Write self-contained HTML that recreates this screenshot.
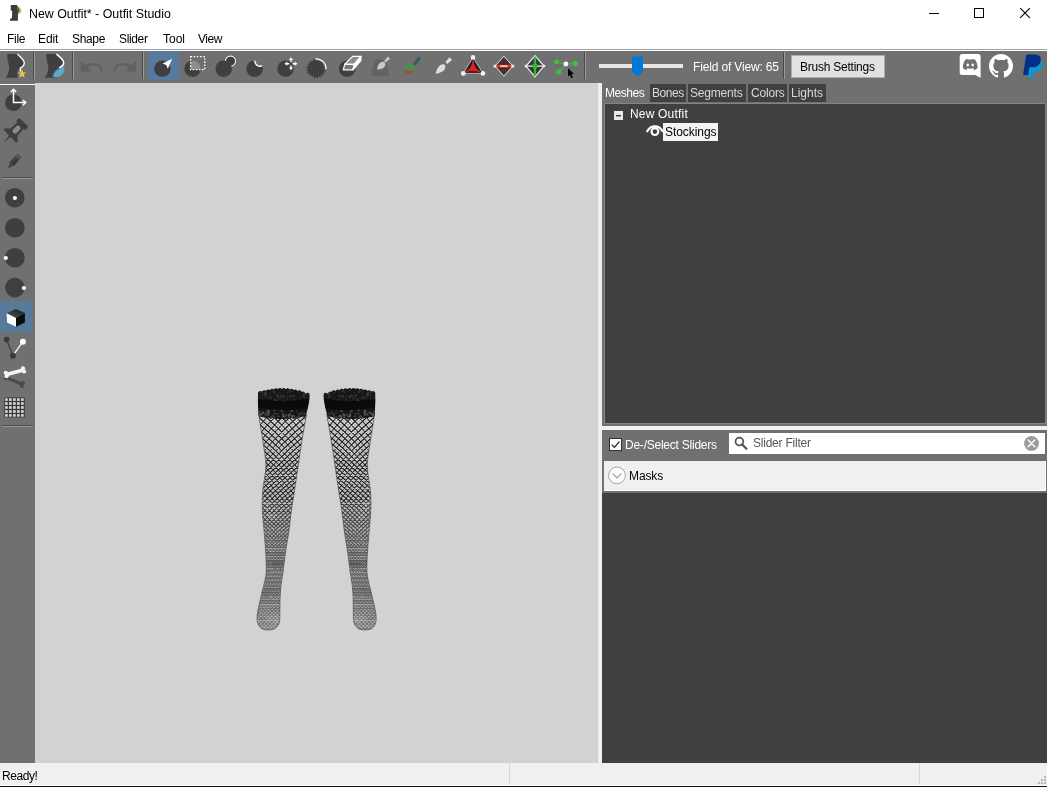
<!DOCTYPE html>
<html lang="en">
<head>
<meta charset="utf-8">
<title>New Outfit* - Outfit Studio</title>
<style>
html,body{margin:0;padding:0;}
body{width:1047px;height:787px;overflow:hidden;background:#fff;position:relative;
  font-family:"Liberation Sans",sans-serif;font-size:12px;color:#000;}
.a{position:absolute;}
.t{position:absolute;white-space:nowrap;line-height:16px;height:16px;will-change:transform;}
svg{position:absolute;overflow:visible;}
/* title + menu */
#title{left:29px;top:6px;font-size:12.4px;}
.menu{top:31px;}
/* toolbar */
#tb{left:0;top:51px;width:1047px;height:32px;background:#707070;}
#tbl1{left:0;top:49px;width:1047px;height:1px;background:#a0a0a0;}
.sep{top:52px;width:1px;height:27px;background:#484848;}
.sep2{top:52px;width:1px;height:27px;background:#9c9c9c;}
.sel{background:#557a9e;}
/* left toolbar */
#lt{left:0;top:83px;width:35px;height:680px;background:#707070;}
#ltl{left:0;top:84px;width:35px;height:1px;background:#fff;}
.hs{left:3px;width:29px;height:1px;background:#4a4a4a;}
.hs2{left:3px;width:29px;height:1px;background:#9a9a9a;}
/* viewport */
#vp{left:35px;top:83px;width:563px;height:680px;background:#d2d2d2;}
/* right */
#sash{left:598px;top:83px;width:4px;height:680px;background:#f0f0f0;}
#rp{left:602px;top:83px;width:445px;height:680px;background:#707070;}
#tree{left:605px;top:104px;width:440px;height:319px;background:#404040;box-shadow:0 0 0 1px #858585;}
#hsash{left:602px;top:426px;width:445px;height:4px;background:#f0f0f0;}
.tab{top:84px;height:18px;background:#404040;}
.tabt{top:85px;color:#d8d8d8;}
#masks{left:604px;top:461px;width:441px;height:29px;background:#f0f0f0;border-right:1px solid #fff;border-bottom:1px solid #fff;}
#dark2{left:602px;top:493px;width:445px;height:270px;background:#404040;}
#search{left:729px;top:433px;width:316px;height:21px;background:#fff;}
/* status */
#sb{left:0;top:763px;width:1047px;height:22px;background:#f0f0f0;}
#sbw{left:0;top:785px;width:1047px;height:1px;background:#fff;}
#sbb{left:0;top:786px;width:1047px;height:1px;background:#111;}
.ss{top:763px;width:1px;height:22px;background:#d7d7d7;}
</style>
</head>
<body>
<!-- title bar -->
<div class="t" id="title">New Outfit* - Outfit Studio</div>
<!-- menu -->
<div class="t menu" style="left:6.6px;letter-spacing:-0.27px">File</div>
<div class="t menu" style="left:38.4px;letter-spacing:-0.1px">Edit</div>
<div class="t menu" style="left:72.4px;letter-spacing:-0.35px">Shape</div>
<div class="t menu" style="left:118.7px;letter-spacing:-0.36px">Slider</div>
<div class="t menu" style="left:162.8px">Tool</div>
<div class="t menu" style="left:198.3px;letter-spacing:-0.5px">View</div>

<div class="a" id="tbl1"></div>
<div class="a" id="tb"></div>
<div class="a sel" style="left:148px;top:51px;width:31px;height:29px"></div>
<div class="a sep" style="left:33px"></div><div class="a sep2" style="left:34px"></div>
<div class="a sep" style="left:72px"></div><div class="a sep2" style="left:73px"></div>
<div class="a sep" style="left:142px"></div><div class="a sep2" style="left:143px"></div>
<div class="a sep" style="left:584px"></div><div class="a sep2" style="left:585px"></div>
<div class="a sep" style="left:783px"></div><div class="a sep2" style="left:784px"></div>

<!-- left toolbar / viewport / right panel -->
<div class="a" id="lt"></div>
<div class="a" id="ltl"></div>
<div class="a sel" style="left:0;top:301px;width:32px;height:31px"></div>
<div class="a hs" style="top:177px;left:2px;width:31px"></div><div class="a hs2" style="top:178px;left:2px;width:31px"></div>
<div class="a hs" style="top:425px;left:2px;width:31px"></div><div class="a hs2" style="top:426px;left:2px;width:31px"></div>
<div class="a" id="vp"></div>
<div class="a" id="sash"></div>
<div class="a" id="rp"></div>
<div class="a" id="tree"></div>
<div class="a" id="hsash"></div>
<div class="a" id="masks"></div>
<div class="a" id="dark2"></div>
<div class="a" id="search"></div>

<!-- tabs -->
<div class="a tab" style="left:650px;width:36px"></div>
<div class="a tab" style="left:688px;width:58px"></div>
<div class="a tab" style="left:748px;width:39px"></div>
<div class="a tab" style="left:789px;width:37px"></div>
<div class="t tabt" style="left:604.9px;color:#fff;letter-spacing:-0.46px">Meshes</div>
<div class="t tabt" style="left:651.7px;letter-spacing:-0.45px">Bones</div>
<div class="t tabt" style="left:690.2px;letter-spacing:-0.2px">Segments</div>
<div class="t tabt" style="left:751.1px;letter-spacing:-0.2px">Colors</div>
<div class="t tabt" style="left:790.8px">Lights</div>

<!-- tree -->
<div class="t" style="left:629.8px;top:106px;color:#fff;letter-spacing:0.19px">New Outfit</div>
<div class="a" style="left:663px;top:123px;width:55px;height:18px;background:#f4f4f4"></div>
<div class="t" style="left:664.5px;top:124px;color:#000;letter-spacing:-0.06px">Stockings</div>

<!-- sliders header -->
<div class="t" style="left:624.6px;top:437px;color:#fff;letter-spacing:-0.235px">De-/Select Sliders</div>
<div class="t" style="left:753.4px;top:435px;color:#575757;letter-spacing:-0.225px">Slider Filter</div>
<div class="t" style="left:628.5px;top:468px;color:#000;letter-spacing:-0.12px">Masks</div>

<!-- toolbar text -->
<div class="t" style="left:693.4px;top:59px;color:#fff;letter-spacing:-0.156px">Field of View: 65</div>
<div class="a" style="left:791px;top:55px;width:92px;height:21px;background:#e1e1e1;border:1px solid #adadad;box-sizing:content-box"></div>
<div class="t" style="left:799.6px;top:59px;color:#000;letter-spacing:-0.24px">Brush Settings</div>

<!-- status bar -->
<div class="a" id="sb"></div>
<div class="a" id="sbw"></div>
<div class="a" id="sbb"></div>
<div class="a ss" style="left:509px"></div>
<div class="a ss" style="left:919px"></div>
<div class="t" style="left:1.6px;top:768px;letter-spacing:-0.44px">Ready!</div>

<!-- toolbar icons (page coordinates) -->
<svg id="ico" width="1047" height="787" viewBox="0 0 1047 787" style="left:0;top:0">
<defs>
<clipPath id="cpSel"><circle cx="192.6" cy="68.7" r="8.3"/></clipPath>
<clipPath id="cpDef"><circle cx="254.6" cy="68.7" r="8.3"/></clipPath>
<linearGradient id="gPen" x1="0" y1="0" x2="1" y2="1"><stop offset="0" stop-color="#555"/><stop offset="1" stop-color="#2c2c2c"/></linearGradient>
<linearGradient id="gCube" x1="0" y1="1" x2="1" y2="0"><stop offset="0" stop-color="#555"/><stop offset="1" stop-color="#161616"/></linearGradient>
</defs>
<!-- 1 new project -->
<g id="i1">
<path d="M7.1,54 L17.3,54 C19.5,56.5 22.8,58.8 24,61.5 C25,64 23.5,66.3 20.3,68.2 L17.4,71 L17.4,77.7 L5.8,77.7 C8,75 9,71 9.2,67.5 C9.2,64 7.6,62 7.4,58 Z" fill="#3f3f3f"/>
<path d="M17.8,54.4 C19.7,56.7 22.8,58.8 24,61.5 C25,64 23.5,66.3 20.4,68.2 L20.4,71" fill="none" stroke="#fff" stroke-width="1.4" stroke-linecap="round"/>
<polygon points="22.00,69.40 23.18,72.38 26.37,72.58 23.90,74.62 24.70,77.72 22.00,76.00 19.30,77.72 20.10,74.62 17.63,72.58 20.82,72.38" fill="#e6c24c"/>
</g>
<!-- 2 load project -->
<g id="i2">
<path d="M46.2,54 L56.3,54 C58.5,56 61.5,58 63,60.5 C64.3,63 63.5,65 61.5,66.3 L59.6,67.5 L57.5,77.7 L44.6,77.7 C47,75 48.2,71 48.3,67.5 C48.3,64 46.7,62 46.5,58 Z" fill="#3f3f3f"/>
<path d="M59.4,67.6 L64.2,66.6 C65,69.4 64.6,71.6 63.4,73.2 C61.8,75.2 59.6,76.4 57.6,77.2 L52.6,77.2 C52.4,74.6 53.2,72.4 54.8,70.9 C56.2,69.6 57.8,68.6 59.4,67.6Z" fill="#62a5c8"/><path d="M59.4,67.6 C57.8,68.6 56.2,69.6 54.8,70.9 C53.2,72.4 52.4,74.6 52.6,77.2" fill="none" stroke="#2b5b7a" stroke-width="1.4"/>
<path d="M56.9,54.4 C58.7,56.2 61.5,58 63,60.5 C64.3,63 63.5,65 61.5,66.3 L59.8,67.4" fill="none" stroke="#fff" stroke-width="1.5" stroke-linecap="round"/>
</g>
<!-- 3 undo / 4 redo (disabled) -->
<g id="i3" fill="#616161" stroke="none">
<path d="M80.7,61 L85.2,65.3 C90,62.5 97,62 100.5,65.5 C103,68 104,70.5 103.2,71.5 L100.8,71.5 C100.5,69 98.5,66 95.5,65.5 C92.5,65.2 89.5,66.5 87.5,67.8 L91.5,71.8 L80.7,71.8 Z"/>
<path d="M135.9,61 L131.4,65.3 C126.6,62.5 119.6,62 116.1,65.5 C113.6,68 112.6,70.5 113.4,71.5 L115.8,71.5 C116.1,69 118.1,66 121.1,65.5 C124.1,65.2 127.1,66.5 129.1,67.8 L125.1,71.8 L135.9,71.8 Z"/>
</g>
<!-- 5 select -->
<circle cx="162.4" cy="68.7" r="8.3" fill="#3f3f3f"/>
<polygon points="172.2,58.7 162.6,63.4 166.2,65 167.8,68.7" fill="#fff"/>
<!-- 6 rect select -->
<circle cx="192.6" cy="68.7" r="8.3" fill="#3f3f3f"/>
<rect x="190.6" y="56.6" width="14.2" height="13" fill="#8e8e8e" clip-path="url(#cpSel)"/><rect x="190.6" y="56.6" width="14.2" height="13" fill="none" stroke="#fff" stroke-width="1.3" stroke-dasharray="1.6 1.55"/>
<!-- 7 inflate -->
<circle cx="230.5" cy="61.1" r="5" fill="#3f3f3f" stroke="#fff" stroke-width="1.1"/>
<circle cx="223.7" cy="68.7" r="8.3" fill="#3f3f3f"/>
<circle cx="230.5" cy="61.1" r="4.4" fill="#3f3f3f"/>
<!-- 8 deflate -->
<circle cx="254.6" cy="68.7" r="8.3" fill="#3f3f3f"/>
<circle cx="260" cy="61.1" r="5.2" fill="#707070"/>
<circle cx="260" cy="61.1" r="5.2" fill="none" stroke="#fff" stroke-width="1.4" clip-path="url(#cpDef)"/>
<!-- 9 move -->
<circle cx="285.6" cy="68.7" r="8.3" fill="#3f3f3f"/>
<g fill="#fff">
<path d="M291,57.2 L293.1,60 L291.7,60 L291.7,62 L290.3,62 L290.3,60 L288.9,60 Z"/>
<path d="M291,70.2 L293.1,67.4 L291.7,67.4 L291.7,65.4 L290.3,65.4 L290.3,67.4 L288.9,67.4 Z"/>
<path d="M284.5,63.7 L287.3,61.6 L287.3,63 L289.3,63 L289.3,64.4 L287.3,64.4 L287.3,65.8 Z"/>
<path d="M297.5,63.7 L294.7,61.6 L294.7,63 L292.7,63 L292.7,64.4 L294.7,64.4 L294.7,65.8 Z"/>
</g>
<!-- 10 smooth -->
<path d="M323.97,69.18 L326.56,71.02 L323.41,71.46 L325.51,74.09 L322.20,73.48 L323.48,76.68 L320.45,75.04 L320.82,78.71 L318.31,76.01 L317.52,79.28 L315.97,76.30 L314.20,79.49 L313.66,75.88 L311.72,77.05 L311.58,74.78 L308.85,75.85 L309.92,73.12 L306.28,73.70 L308.82,71.04 L305.67,70.42 L308.40,68.73 L305.15,67.14 L308.69,66.39 L307.28,64.47 L309.66,64.25 L308.43,61.59 L311.22,62.50 L311.04,59.91 L313.24,61.29 L313.71,58.27 L315.52,60.73 A7.80,7.80 0 0 1 323.97,69.18 Z" fill="#3f3f3f"/>
<circle cx="316.2" cy="68.5" r="8.3" fill="#3f3f3f"/>
<path d="M315.4,58.9 A9.7,9.7 0 0 1 326,69.3" fill="none" stroke="#fff" stroke-width="1.2"/>
<!-- 11 mask / eraser -->
<circle cx="347.2" cy="68.7" r="8.3" fill="#3f3f3f"/>
<g stroke="#fff" stroke-width="1.2" stroke-linejoin="round">
<path d="M352.7,56.4 L361,56.4 L354.1,64.3 L344.7,64.3 Z" fill="#8c8c8c"/>
<path d="M344.7,64.3 L354.1,64.3 L353,69.8 L343.3,69.8 Z" fill="#777"/>
<path d="M361,56.4 L360.8,60.6 L353,69.8 L354.1,64.3 Z" fill="#fff"/>
</g>
<!-- 12 weight (disabled) -->
<path d="M371.6,76.2 L371.6,70 L375.2,60.5 L378.5,58.5 L384.5,60.5 L388.6,70 L388.6,76.2 Z" fill="#636363"/>
<g fill="#c9c9c9">
<path d="M387.9,56.6 L390.1,58.8 L385.6,62.6 L384.1,61.1 Z"/>
<path d="M384.6,62.2 C386.2,64.6 384.8,67.6 382.2,68.6 C380.3,69.3 378.4,69.2 377.3,69.9 C377.6,68.2 377.4,66.5 378.4,64.7 C379.7,62.3 382.6,61.2 384.6,62.2 Z"/>
</g>
<!-- 13 color brush -->
<clipPath id="cpRed"><rect x="400" y="70.8" width="20" height="8"/></clipPath>
<path d="M418.8,58.6 L415,63.8" stroke="#3c5766" stroke-width="3.6" stroke-linecap="round" fill="none"/>
<ellipse cx="409.8" cy="68.7" rx="6" ry="4.3" transform="rotate(-38 409.8 68.7)" fill="#4f8c4f"/>
<g clip-path="url(#cpRed)"><ellipse cx="409.8" cy="68.7" rx="6" ry="4.3" transform="rotate(-38 409.8 68.7)" fill="#a84a36"/></g>
<!-- 14 alpha brush -->
<g fill="#dcdcdc">
<path d="M449.4,57.2 L452,60 L447.2,64 L445.4,62.2 Z"/>
<path d="M444.4,64.6 C446.4,66.8 445,70.2 442.2,71.6 C440.2,72.6 438,73.6 435.8,74 C436,71.8 436.6,69.6 438,67.4 C439.6,65 442.4,63.4 444.4,64.6 Z"/>
</g>
<!-- 15 collapse vertex -->
<polygon points="473,57.4 463.3,73.4 482.9,73.4" fill="#1c1c1c" stroke="#cfcfcf" stroke-width="0.8"/>
<polygon points="473,62 468.3,71.2 477.7,71.2" fill="#e81616"/>
<path d="M473,60.5 L473,67.5 M466.2,72.2 L473,67.5 L479.8,72.2" stroke="#f02020" stroke-width="1.5" fill="none"/>
<circle cx="473" cy="57.4" r="2.3" fill="#f2f2f2"/>
<circle cx="463.3" cy="73.4" r="2.4" fill="#f2f2f2"/>
<circle cx="482.9" cy="73.4" r="2.4" fill="#f2f2f2"/>
<!-- 16 flip edge -->
<polygon points="503.9,56.2 512.8,66.1 503.9,76.1 495,66.1" fill="#4a2e2e" stroke="#e6e6e6" stroke-width="1"/>
<path d="M496.5,66.1 L511.3,66.1" stroke="#e6311b" stroke-width="2.6"/>
<path d="M500.2,66.1 L507.6,66.1" stroke="#fff" stroke-width="1.3"/>
<circle cx="495" cy="66.1" r="1.6" fill="#eee"/><circle cx="512.8" cy="66.1" r="1.6" fill="#eee"/>
<!-- 17 split edge -->
<polygon points="535,55.6 544,66.1 535,76.8 526,66.1" fill="#3a3a3a" stroke="#f0f0f0" stroke-width="1.2"/>
<path d="M526.5,66.1 L543.5,66.1" stroke="#e8e8e8" stroke-width="1.3"/>
<path d="M535,56.5 L535,76" stroke="#2dbd2d" stroke-width="2.2"/>
<circle cx="535" cy="66.1" r="2.6" fill="#2dbd2d"/>
<circle cx="526" cy="66.1" r="1.4" fill="#eee"/><circle cx="544" cy="66.1" r="1.4" fill="#eee"/>
<!-- 18 move vertex -->
<g stroke="#39c439" stroke-width="1.5" fill="none" stroke-dasharray="2.2 1">
<path d="M565.9,64 L556.5,61.8 M565.9,64 L575.3,63.6 M565.9,64 L558.6,71.9"/>
</g>
<circle cx="556.5" cy="61.8" r="2.4" fill="#39c439"/><circle cx="575.3" cy="63.6" r="2.6" fill="#39c439"/><circle cx="558.6" cy="71.9" r="2.5" fill="#39c439"/>
<circle cx="565.9" cy="64" r="2.4" fill="#fff"/>
<path d="M568,68.3 L568,76.6 L569.9,74.9 L571.5,78.2 L573,77.5 L571.4,74.3 L574,74.1 Z" fill="#000"/>

<!-- right-side link icons -->
<g id="discord">
<path d="M962.2,54 H978.1 A2.5,2.5 0 0 1 980.6,56.5 V77.8 L975.2,74.9 H962.2 A2.5,2.5 0 0 1 959.7,72.4 V56.5 A2.5,2.5 0 0 1 962.2,54 Z" fill="#fff"/>
<path transform="translate(962.9,57.2) scale(0.61)" fill="#707070" fill-rule="evenodd" d="M20.317 4.3698a19.7913 19.7913 0 00-4.8851-1.5152.0741.0741 0 00-.0785.0371c-.211.3753-.4447.8648-.6083 1.2495-1.8447-.2762-3.68-.2762-5.4868 0-.1636-.3933-.4058-.8742-.6177-1.2495a.077.077 0 00-.0785-.037 19.7363 19.7363 0 00-4.8852 1.515.0699.0699 0 00-.0321.0277C.5334 9.0458-.319 13.5799.0992 18.0578a.0824.0824 0 00.0312.0561c2.0528 1.5076 4.0413 2.4228 5.9929 3.0294a.0777.0777 0 00.0842-.0276c.4616-.6304.8731-1.2952 1.226-1.9942a.076.076 0 00-.0416-.1057c-.6528-.2476-1.2743-.5495-1.8722-.8923a.077.077 0 01-.0076-.1277c.1258-.0943.2517-.1923.3718-.2914a.0743.0743 0 01.0776-.0105c3.9278 1.7933 8.18 1.7933 12.0614 0a.0739.0739 0 01.0785.0095c.1202.099.246.1981.3728.2924a.077.077 0 01-.0066.1276 12.2986 12.2986 0 01-1.873.8914.0766.0766 0 00-.0407.1067c.3604.698.7719 1.3628 1.225 1.9932a.076.076 0 00.0842.0286c1.961-.6067 3.9495-1.5219 6.0023-3.0294a.077.077 0 00.0313-.0552c.5004-5.177-.8382-9.6739-3.5485-13.6604a.061.061 0 00-.0312-.0286zM8.02 15.3312c-1.1825 0-2.1569-1.0857-2.1569-2.419 0-1.3332.9555-2.4189 2.157-2.4189 1.2108 0 2.1757 1.0952 2.1568 2.419 0 1.3332-.9555 2.4189-2.1569 2.4189zm7.9748 0c-1.1825 0-2.1569-1.0857-2.1569-2.419 0-1.3332.9554-2.4189 2.1569-2.4189 1.2108 0 2.1757 1.0952 2.1568 2.419 0 1.3332-.946 2.4189-2.1568 2.4189Z"/>
</g>
<g id="github">
<path transform="translate(989,53.8)" fill="#fff" d="M12 .297c-6.63 0-12 5.373-12 12 0 5.303 3.438 9.8 8.205 11.385.6.113.82-.258.82-.577 0-.285-.01-1.04-.015-2.04-3.338.724-4.042-1.61-4.042-1.61C4.422 18.07 3.633 17.7 3.633 17.7c-1.087-.744.084-.729.084-.729 1.205.084 1.838 1.236 1.838 1.236 1.07 1.835 2.809 1.305 3.495.998.108-.776.417-1.305.76-1.605-2.665-.3-5.466-1.332-5.466-5.93 0-1.31.465-2.38 1.235-3.22-.135-.303-.54-1.523.105-3.176 0 0 1.005-.322 3.3 1.23.96-.267 1.98-.399 3-.405 1.02.006 2.04.138 3 .405 2.28-1.552 3.285-1.23 3.285-1.23.645 1.653.24 2.873.12 3.176.765.84 1.23 1.91 1.23 3.22 0 4.61-2.805 5.625-5.475 5.92.42.36.81 1.096.81 2.22 0 1.606-.015 2.896-.015 3.286 0 .315.21.69.825.57C20.565 22.092 24 17.592 24 12.297c0-6.627-5.373-12-12-12"/>
</g>
<g id="paypal" transform="translate(1021.4,54.5) scale(0.96)">
<path fill="#009cde" d="M21.222 6.917a3.35 3.35 0 0 0-.607-.541c-.013.076-.026.175-.041.254-.93 4.778-4.005 7.201-9.138 7.201h-2.19a.563.563 0 0 0-.556.479l-1.187 7.527h-.506l-.24 1.516a.56.56 0 0 0 .554.647h3.882c.46 0 .85-.334.922-.788.06-.26.76-4.852.816-5.09a.932.932 0 0 1 .923-.788h.58c3.76 0 6.705-1.528 7.565-5.946.36-1.847.174-3.388-.777-4.471z"/>
<path fill="#003087" d="M7.076 21.337H2.47a.641.641 0 0 1-.633-.74L4.944.901C5.026.382 5.474 0 5.998 0h7.46c2.57 0 4.578.543 5.69 1.81 1.01 1.15 1.304 2.42 1.012 4.287-.023.143-.047.288-.077.437-.983 5.05-4.349 6.797-8.647 6.797h-2.19c-.524 0-.968.382-1.05.9l-1.12 7.106z"/>
</g>

<!-- left toolbar icons -->
<circle cx="13.4" cy="102.7" r="8.4" fill="#3f3f3f"/>
<path d="M13.5,89.5 L13.5,102.6 L25.4,102.6" fill="none" stroke="#fff" stroke-width="1.5"/>
<path d="M10.9,92.1 L13.5,89.3 L16.1,92.1 M22.9,100 L25.7,102.6 L22.9,105.2" fill="none" stroke="#fff" stroke-width="1.4"/>
<!-- pin -->
<g fill="#3f3f3f" transform="translate(14.9,131.2) rotate(45) scale(1.08)">
<rect x="-6" y="-11.8" width="12" height="4.6" rx="1.4"/>
<path d="M-4.2,-7.6 L4.2,-7.6 L4.6,1.2 L8.4,4.6 L8.4,6.6 L-8.4,6.6 L-8.4,4.6 L-4.6,1.2 Z"/>
<path d="M-0.9,6 L0.9,6 L0,15.4 Z"/>
<rect x="-2.3" y="-6.4" width="4.6" height="8.4" rx="2.2" fill="#8a8a8a"/>
</g>
<!-- pencil -->
<g transform="translate(14.4,161) rotate(41)">
<rect x="-2.9" y="-7.4" width="5.8" height="11.6" fill="url(#gPen)"/>
<rect x="-2.9" y="-5.9" width="5.8" height="1" fill="#6a6a6a"/>
<path d="M-2.9,4.2 L2.9,4.2 L0,8.6 Z" fill="#4a4a4a"/>
<path d="M-0.95,7.2 L0.95,7.2 L0,8.8 Z" fill="#222"/>
</g>
<!-- brush size/strength circles -->
<circle cx="14.8" cy="197.8" r="9.8" fill="#3f3f3f"/><circle cx="14.9" cy="198" r="2.1" fill="#fff"/>
<circle cx="14.8" cy="227.7" r="9.8" fill="#3f3f3f"/>
<circle cx="14.9" cy="257.7" r="9.8" fill="#3f3f3f"/><circle cx="5.8" cy="258" r="2.1" fill="#fff"/>
<circle cx="14.9" cy="287.6" r="9.8" fill="#3f3f3f"/><circle cx="23.9" cy="288" r="2.1" fill="#fff"/>
<!-- cube -->
<polygon points="6.6,313.3 15.7,309 24.9,313 16,317.9" fill="url(#gCube)"/>
<polygon points="6.6,313.3 16,317.9 16,326.7 7.1,322.4" fill="#fdfdfd"/>
<polygon points="16,317.9 24.9,313 24.9,322.4 16,326.7" fill="#0c0c0c"/>
<!-- vertices -->
<path d="M6.7,339.6 L12.9,355.7" stroke="#3a3a3a" stroke-width="1.2"/>
<path d="M12.9,355.7 L22.9,341.7" stroke="#fff" stroke-width="1.2"/>
<circle cx="6.7" cy="339.6" r="2.8" fill="#3a3a3a"/><circle cx="12.9" cy="355.7" r="3" fill="#3a3a3a"/><circle cx="22.9" cy="341.7" r="3" fill="#fff"/>
<!-- bones -->
<g stroke="#4a4a4a" stroke-linecap="round" fill="#4a4a4a">
<path d="M8.5,378.5 L21.5,384" stroke-width="3.4"/>
<circle cx="6.6" cy="376.4" r="1.8" stroke="none"/><circle cx="5.6" cy="378.6" r="1.8" stroke="none"/>
<circle cx="23.2" cy="383" r="1.9" stroke="none"/><circle cx="22" cy="386" r="1.9" stroke="none"/>
</g>
<g stroke="#f4f4f4" stroke-linecap="round" fill="#f4f4f4">
<path d="M7.5,374.3 L22.5,370.3" stroke-width="3.6"/>
<circle cx="5.8" cy="372.8" r="2.1" stroke="none"/><circle cx="6.6" cy="376.2" r="2.1" stroke="none"/>
<circle cx="23" cy="368.3" r="2.1" stroke="none"/><circle cx="24.1" cy="371.5" r="2.1" stroke="none"/>
</g>
<!-- grid -->
<rect x="4.3" y="397.4" width="20.4" height="20" fill="#3a3a3a"/>
<g fill="#dcdcdc" id="gridcells"><rect x="5.1" y="398.3" width="2.6" height="2.6"/><rect x="5.1" y="402.2" width="2.6" height="2.6"/><rect x="5.1" y="406.2" width="2.6" height="2.6"/><rect x="5.1" y="410.2" width="2.6" height="2.6"/><rect x="5.1" y="414.1" width="2.6" height="2.6"/><rect x="9.1" y="398.3" width="2.6" height="2.6"/><rect x="9.1" y="402.2" width="2.6" height="2.6"/><rect x="9.1" y="406.2" width="2.6" height="2.6"/><rect x="9.1" y="410.2" width="2.6" height="2.6"/><rect x="9.1" y="414.1" width="2.6" height="2.6"/><rect x="13.1" y="398.3" width="2.6" height="2.6"/><rect x="13.1" y="402.2" width="2.6" height="2.6"/><rect x="13.1" y="406.2" width="2.6" height="2.6"/><rect x="13.1" y="410.2" width="2.6" height="2.6"/><rect x="13.1" y="414.1" width="2.6" height="2.6"/><rect x="17.1" y="398.3" width="2.6" height="2.6"/><rect x="17.1" y="402.2" width="2.6" height="2.6"/><rect x="17.1" y="406.2" width="2.6" height="2.6"/><rect x="17.1" y="410.2" width="2.6" height="2.6"/><rect x="17.1" y="414.1" width="2.6" height="2.6"/><rect x="21.1" y="398.3" width="2.6" height="2.6"/><rect x="21.1" y="402.2" width="2.6" height="2.6"/><rect x="21.1" y="406.2" width="2.6" height="2.6"/><rect x="21.1" y="410.2" width="2.6" height="2.6"/><rect x="21.1" y="414.1" width="2.6" height="2.6"/></g>

<!-- title icon -->
<path d="M10.8,5 L17,5 L18,10.7 L17.9,20.8 L10,20.8 L10,19.3 L12,17.8 L12.2,10.7 L10.8,10.7 Z" fill="#3b3b3b"/>
<path d="M17,5.6 C19.5,7 21.6,9.3 21.6,11 C21.3,12.8 19.4,13.6 17.9,15.2 L17.9,10.7 Z" fill="#b5ab62" fill-opacity="0.75"/>
<path d="M17,5.6 C18.6,7.4 19.8,9.6 19.6,11 C19.3,12 18.6,12.4 17.9,13 Z" fill="#5e5724"/>
<!-- window controls -->
<rect x="929" y="13" width="10" height="1" fill="#000"/>
<rect x="974.5" y="8.5" width="9" height="9" fill="none" stroke="#000" stroke-width="1"/>
<path d="M1020.2,8.2 L1029.8,17.8 M1029.8,8.2 L1020.2,17.8" stroke="#000" stroke-width="1.1" fill="none"/>
<!-- tree: minus box + eye -->
<rect x="614" y="111" width="9" height="9" fill="#e9e9e9"/>
<rect x="616" y="115" width="5" height="1.4" fill="#333"/>
<g id="eye">
<path d="M647.2,131.2 C649.4,127.6 652,126.4 654.8,126.4 C657.6,126.4 660.4,127.6 662.6,131.2" fill="none" stroke="#fff" stroke-width="2.2" stroke-linecap="round"/>
<circle cx="654.9" cy="131.6" r="3.4" fill="none" stroke="#fff" stroke-width="2.2"/>
<circle cx="654.9" cy="131.6" r="1.3" fill="#404040"/>
</g>
<!-- checkbox -->
<rect x="609.5" y="438.5" width="12" height="12" fill="#fff" stroke="#333" stroke-width="1"/>
<path d="M611.8,444.6 L614.4,447.4 L619.4,441.6" fill="none" stroke="#222" stroke-width="1.3"/>
<!-- search icon -->
<circle cx="739.4" cy="441.6" r="3.9" fill="none" stroke="#505050" stroke-width="1.7"/>
<path d="M742.2,444.6 L746.4,448.8" stroke="#505050" stroke-width="2.1" stroke-linecap="round"/>
<!-- clear button -->
<circle cx="1031.5" cy="443.4" r="7.4" fill="#9b9b9b"/>
<path d="M1028.2,440.1 L1034.8,446.7 M1034.8,440.1 L1028.2,446.7" stroke="#fff" stroke-width="1.4" stroke-linecap="round"/>
<!-- collapsible pane button -->
<circle cx="617" cy="475.4" r="8.4" fill="#fcfcfc" stroke="#a6a6a6" stroke-width="1"/>
<path d="M612.6,473.6 L617,478 L621.4,473.6" fill="none" stroke="#9a9a9a" stroke-width="1.2"/>
<!-- status grip -->
<g fill="#b8b8b8">
<rect x="1044" y="776" width="2" height="2"/>
<rect x="1041" y="779" width="2" height="2"/><rect x="1044" y="779" width="2" height="2"/>
<rect x="1038" y="782" width="2" height="2"/><rect x="1041" y="782" width="2" height="2"/><rect x="1044" y="782" width="2" height="2"/>
</g>

<!-- stockings mesh (viewport) -->
<defs>
<filter id="fMesh" x="-5%" y="-5%" width="110%" height="110%"><feGaussianBlur stdDeviation="0.9"/></filter>
<linearGradient id="gLow" gradientUnits="userSpaceOnUse" x1="0" y1="480" x2="0" y2="570"><stop offset="0" stop-color="#000"/><stop offset="1" stop-color="#777"/></linearGradient>
<mask id="mLow" maskUnits="userSpaceOnUse" x="250" y="480" width="70" height="155"><rect x="250" y="480" width="70" height="155" fill="url(#gLow)"/></mask>
<clipPath id="laceclip"><path d="M258,392.6 Q260.0,390.2 262.0,391.7 Q263.9,389.3 265.9,390.8 Q267.9,388.5 269.9,390.0 Q271.9,387.8 273.8,389.5 Q275.8,387.3 277.8,389.1 Q279.8,387.1 281.8,389.0 Q283.8,387.1 285.7,389.2 Q287.7,387.4 289.7,389.5 Q291.7,387.9 293.7,390.1 Q295.6,388.6 297.6,390.9 Q299.6,389.5 301.6,391.8 Q303.6,390.4 305.5,393.8 Q307.5,391.9 309.5,393.8 C309.9,398 309,403 307.8,408 C307,411.5 306.2,414 305.8,416 Q303.4,418.0 301.1,416.8 Q298.7,418.8 296.3,417.5 Q294.0,419.4 291.6,418.1 Q289.2,419.9 286.9,418.5 Q284.5,420.2 282.1,418.6 Q279.8,420.2 277.4,418.5 Q275.1,419.9 272.7,418.1 Q270.3,419.4 268.0,417.5 Q265.6,418.8 263.2,416.8 Q260.9,418.0 258.5,416.0 C258,408 257.8,400 258,392.6 Z"/></clipPath>
<clipPath id="legclip"><path d="M259,414 L259.4,420 L262.7,440 C264,450 265.9,458 265.9,465 C265.9,474 263.4,482 262.7,491 C262,500 262.2,508 262.7,516 C263.4,526 264.6,535 265.2,545 C265.8,555 266.6,563 266.3,571 C266,578 264.2,583 262.8,589 C261.4,595 258.6,606 257.3,614 C256.4,620 257.5,625.5 261,628.3 C264,630.4 270,630.6 274,629 C277.6,627.4 279.6,624 279.8,619 C280,609 279.8,598 280.6,589 C281.2,582 282.4,577 283.2,571 C284.2,563 285.5,551 287.5,540 C289,531 290,523 290.7,516 C291.8,507 293.2,499 294.5,491 C295.8,482 297.2,473 298.3,465 C299.6,456 300.6,449 302.1,440 C303.4,432 304.6,425 305.5,420 L306.5,414 Z"/></clipPath>
<g id="leg">
<path d="M259,414 L259.4,420 L262.7,440 C264,450 265.9,458 265.9,465 C265.9,474 263.4,482 262.7,491 C262,500 262.2,508 262.7,516 C263.4,526 264.6,535 265.2,545 C265.8,555 266.6,563 266.3,571 C266,578 264.2,583 262.8,589 C261.4,595 258.6,606 257.3,614 C256.4,620 257.5,625.5 261,628.3 C264,630.4 270,630.6 274,629 C277.6,627.4 279.6,624 279.8,619 C280,609 279.8,598 280.6,589 C281.2,582 282.4,577 283.2,571 C284.2,563 285.5,551 287.5,540 C289,531 290,523 290.7,516 C291.8,507 293.2,499 294.5,491 C295.8,482 297.2,473 298.3,465 C299.6,456 300.6,449 302.1,440 C303.4,432 304.6,425 305.5,420 L306.5,414 Z" fill="#dcdcdc"/>
<g clip-path="url(#legclip)">
<!--MESH-->
<g id="meshg" stroke-linecap="round">
<linearGradient id="gFront" gradientUnits="userSpaceOnUse" x1="0" y1="418" x2="0" y2="630"><stop offset="0" stop-color="#181818"/><stop offset="0.35" stop-color="#222222"/><stop offset="0.6" stop-color="#4c4c4c"/><stop offset="1" stop-color="#5c5c5c"/></linearGradient>
<linearGradient id="gBack" gradientUnits="userSpaceOnUse" x1="0" y1="418" x2="0" y2="630"><stop offset="0" stop-color="#9c9c9c"/><stop offset="0.5" stop-color="#b4b4b4"/><stop offset="1" stop-color="#d0d0d0"/></linearGradient>
<path d="M262.7,410.0 L258.9,414.0 L255.2,418.0 M270.5,410.0 L266.5,414.0 L262.7,418.0 L259.1,422.0 L255.9,426.0 M278.2,410.0 L274.2,414.0 L270.2,418.0 L266.5,422.0 L263.0,426.0 L259.6,430.0 L256.4,434.0 M286.0,410.0 L281.8,414.0 L277.7,418.0 L273.8,422.0 L270.1,426.0 L266.5,430.0 L263.1,434.0 L259.8,438.0 M293.8,410.0 L289.5,414.0 L285.2,418.0 L281.1,422.0 L277.2,426.0 L273.4,430.0 L269.8,434.0 L266.2,438.0 L262.8,442.0 L259.4,446.0 M301.6,410.0 L297.2,414.0 L292.7,418.0 L288.4,422.0 L284.3,426.0 L280.3,430.0 L276.4,434.0 L272.7,438.0 L269.0,442.0 L265.4,446.0 L262.0,450.0 M309.3,410.0 L304.8,414.0 L300.2,418.0 L295.8,422.0 L291.4,426.0 L287.2,430.0 L283.1,434.0 L279.2,438.0 L275.3,442.0 L271.5,446.0 L267.9,450.0 L264.3,454.0 L260.9,458.0 M312.5,414.0 L307.8,418.0 L303.1,422.0 L298.5,426.0 L294.1,430.0 L289.8,434.0 L285.6,438.0 L281.6,442.0 L277.6,446.0 L273.8,450.0 L270.1,454.0 L266.5,458.0 L263.0,462.0 M310.4,422.0 L305.7,426.0 L301.0,430.0 L296.5,434.0 L292.1,438.0 L287.8,442.0 L283.7,446.0 L279.7,450.0 L275.8,454.0 L272.0,458.0 L268.4,462.0 L264.6,466.0 M307.9,430.0 L303.2,434.0 L298.6,438.0 L294.1,442.0 L289.8,446.0 L285.6,450.0 L281.5,454.0 L277.5,458.0 L273.7,462.0 L269.8,466.0 L265.3,470.0 L260.8,474.0 M305.0,438.0 L300.4,442.0 L295.9,446.0 L291.5,450.0 L287.2,454.0 L283.1,458.0 L279.1,462.0 L275.0,466.0 L270.5,470.0 L266.0,474.0 L261.5,478.0 M306.6,442.0 L301.9,446.0 L297.4,450.0 L292.9,454.0 L288.6,458.0 L284.4,462.0 L280.3,466.0 L275.7,470.0 L271.2,474.0 L266.7,478.0 L262.2,482.0 M303.3,450.0 L298.7,454.0 L294.2,458.0 L289.8,462.0 L285.5,466.0 L280.9,470.0 L276.4,474.0 L271.9,478.0 L267.4,482.0 L262.9,486.0 L258.4,490.0 M304.4,454.0 L299.7,458.0 L295.2,462.0 L290.7,466.0 L286.1,470.0 L281.6,474.0 L277.1,478.0 L272.5,482.0 L268.0,486.0 L263.5,490.0 L259.3,494.0 M300.5,462.0 L295.9,466.0 L291.4,470.0 L286.8,474.0 L282.2,478.0 L277.7,482.0 L273.2,486.0 L268.7,490.0 L264.3,494.0 L260.1,498.0 M301.1,466.0 L296.6,470.0 L292.0,474.0 L287.4,478.0 L282.9,482.0 L278.3,486.0 L273.8,490.0 L269.4,494.0 L265.1,498.0 L261.1,502.0 M301.8,470.0 L297.2,474.0 L292.6,478.0 L288.0,482.0 L283.5,486.0 L278.9,490.0 L274.5,494.0 L270.1,498.0 L266.0,502.0 L262.1,506.0 L258.3,510.0 M297.8,478.0 L293.2,482.0 L288.6,486.0 L284.1,490.0 L279.6,494.0 L275.1,498.0 L270.9,502.0 L266.9,506.0 L262.9,510.0 L259.1,514.0 M298.4,482.0 L293.8,486.0 L289.2,490.0 L284.6,494.0 L280.1,498.0 L275.8,502.0 L271.7,506.0 L267.6,510.0 L263.7,514.0 L260.0,518.0 M298.9,486.0 L294.3,490.0 L289.7,494.0 L285.1,498.0 L280.7,502.0 L276.5,506.0 L272.3,510.0 L268.3,514.0 L264.4,518.0 L260.8,522.0 M294.8,494.0 L290.1,498.0 L285.6,502.0 L281.3,506.0 L277.0,510.0 L272.8,514.0 L268.8,518.0 L265.1,522.0 L261.4,526.0 M295.1,498.0 L290.5,502.0 L286.1,506.0 L281.7,510.0 L277.4,514.0 L273.3,518.0 L269.4,522.0 L265.6,526.0 L261.9,530.0 M295.5,502.0 L290.9,506.0 L286.4,510.0 L282.0,514.0 L277.7,518.0 L273.6,522.0 L269.7,526.0 L265.9,530.0 L262.3,534.0 M295.7,506.0 L291.1,510.0 L286.6,514.0 L282.2,518.0 L277.9,522.0 L273.8,526.0 L269.9,530.0 L266.1,534.0 L262.4,538.0 M295.7,510.0 L291.1,514.0 L286.6,518.0 L282.2,522.0 L278.0,526.0 L273.9,530.0 L269.9,534.0 L266.1,538.0 L262.5,542.0 M291.0,518.0 L286.5,522.0 L282.1,526.0 L277.8,530.0 L273.7,534.0 L269.8,538.0 L266.0,542.0 L262.3,546.0 M290.8,522.0 L286.2,526.0 L281.8,530.0 L277.5,534.0 L273.4,538.0 L269.5,542.0 L265.7,546.0 M290.3,526.0 L285.8,530.0 L281.3,534.0 L277.1,538.0 L273.0,542.0 L269.1,546.0 L265.2,550.0 M289.7,530.0 L285.2,534.0 L280.8,538.0 L276.6,542.0 L272.5,546.0 L268.5,550.0 L264.6,554.0 M289.0,534.0 L284.4,538.0 L280.1,542.0 L275.9,546.0 L271.8,550.0 L267.8,554.0 L264.0,558.0 M288.1,538.0 L283.6,542.0 L279.3,546.0 L275.1,550.0 L271.0,554.0 L267.1,558.0 L263.3,562.0 M287.1,542.0 L282.7,546.0 L278.4,550.0 L274.2,554.0 L270.1,558.0 L266.2,562.0 M286.1,546.0 L281.6,550.0 L277.4,554.0 L273.2,558.0 L269.2,562.0 L265.3,566.0 M284.9,550.0 L280.5,554.0 L276.3,558.0 L272.2,562.0 L268.2,566.0 L264.4,570.0 M288.2,550.0 L283.7,554.0 L279.4,558.0 L275.1,562.0 L271.1,566.0 L267.1,570.0 M286.9,554.0 L282.4,558.0 L278.1,562.0 L273.9,566.0 L269.9,570.0 L265.5,574.0 M285.5,558.0 L281.1,562.0 L276.8,566.0 L272.6,570.0 L268.2,574.0 L263.6,578.0 M284.0,562.0 L279.6,566.0 L275.4,570.0 L270.9,574.0 L266.3,578.0 M287.0,562.0 L282.5,566.0 L278.1,570.0 L273.6,574.0 L269.0,578.0 L264.2,582.0 M285.4,566.0 L280.9,570.0 L276.3,574.0 L271.7,578.0 L267.0,582.0 L262.0,586.0 M283.6,570.0 L279.1,574.0 L274.5,578.0 L269.7,582.0 L264.8,586.0 M281.8,574.0 L277.2,578.0 L272.5,582.0 L267.7,586.0 L262.7,590.0 M284.5,574.0 L279.9,578.0 L275.2,582.0 L270.5,586.0 L265.6,590.0 L260.7,594.0 M282.6,578.0 L278.0,582.0 L273.3,586.0 L268.5,590.0 L263.8,594.0 L258.8,598.0 M280.7,582.0 L276.1,586.0 L271.4,590.0 L266.8,594.0 L262.0,598.0 L257.0,602.0 M283.5,582.0 L278.9,586.0 L274.4,590.0 L269.8,594.0 L265.1,598.0 L260.3,602.0 M281.7,586.0 L277.3,590.0 L272.9,594.0 L268.3,598.0 L263.6,602.0 L258.8,606.0 M280.2,590.0 L275.9,594.0 L271.5,598.0 L266.9,602.0 L262.2,606.0 L257.5,610.0 M283.1,590.0 L278.9,594.0 L274.6,598.0 L270.2,602.0 L265.6,606.0 L261.0,610.0 L256.2,614.0 M282.0,594.0 L277.8,598.0 L273.5,602.0 L269.0,606.0 L264.5,610.0 L259.8,614.0 L255.7,618.0 M281.0,598.0 L276.7,602.0 L272.4,606.0 L268.0,610.0 L263.4,614.0 L259.3,618.0 L255.2,622.0 M280.0,602.0 L275.8,606.0 L271.5,610.0 L267.1,614.0 L263.0,618.0 L258.8,622.0 L254.8,626.0 M279.2,606.0 L275.0,610.0 L270.7,614.0 L266.6,618.0 L262.5,622.0 L258.5,626.0 L254.5,630.0 M282.7,606.0 L278.6,610.0 L274.3,614.0 L270.3,618.0 L266.2,622.0 L262.2,626.0 L258.2,630.0 L256.2,634.0 M282.1,610.0 L278.0,614.0 L273.9,618.0 L269.9,622.0 L265.9,626.0 L261.9,630.0 L259.9,634.0 M281.6,614.0 L277.6,618.0 L273.6,622.0 L269.6,626.0 L265.6,630.0 L263.6,634.0 M281.2,618.0 L277.2,622.0 L273.2,626.0 L269.2,630.0 L267.2,634.0 M280.9,622.0 L276.9,626.0 L272.9,630.0 L270.9,634.0 M280.6,626.0 L276.6,630.0 L274.6,634.0 M280.3,630.0 L278.3,634.0 M255.8,630.0 L257.8,634.0 M255.5,626.0 L259.5,630.0 L261.5,634.0 M255.2,622.0 L259.2,626.0 L263.2,630.0 L265.2,634.0 M255.0,618.0 L258.8,622.0 L262.8,626.0 L266.8,630.0 L268.8,634.0 M254.8,614.0 L258.6,618.0 L262.5,622.0 L266.5,626.0 L270.5,630.0 L272.5,634.0 M255.2,610.0 L258.4,614.0 L262.3,618.0 L266.2,622.0 L270.2,626.0 L274.2,630.0 L276.2,634.0 M258.7,610.0 L262.0,614.0 L265.9,618.0 L269.9,622.0 L273.9,626.0 L277.9,630.0 L279.9,634.0 M259.0,606.0 L262.3,610.0 L265.7,614.0 L269.6,618.0 L273.5,622.0 L277.5,626.0 L281.5,630.0 M259.2,602.0 L262.4,606.0 L265.8,610.0 L269.3,614.0 L273.2,618.0 L277.2,622.0 L281.2,626.0 M259.4,598.0 L262.5,602.0 L265.8,606.0 L269.3,610.0 L272.9,614.0 L276.9,618.0 L280.9,622.0 M259.5,594.0 L262.5,598.0 L265.8,602.0 L269.2,606.0 L272.8,610.0 L276.6,614.0 L280.5,618.0 M262.5,594.0 L265.7,598.0 L269.0,602.0 L272.6,606.0 L276.3,610.0 L280.2,614.0 M262.4,590.0 L265.5,594.0 L268.9,598.0 L272.3,602.0 L276.0,606.0 L279.9,610.0 M262.2,586.0 L265.3,590.0 L268.6,594.0 L272.0,598.0 L275.6,602.0 L279.4,606.0 M262.0,582.0 L265.0,586.0 L268.2,590.0 L271.6,594.0 L275.2,598.0 L278.9,602.0 L282.8,606.0 M264.8,582.0 L267.9,586.0 L271.1,590.0 L274.6,594.0 L278.3,598.0 L282.2,602.0 M264.3,578.0 L267.5,582.0 L270.7,586.0 L274.0,590.0 L277.7,594.0 L281.5,598.0 M263.6,574.0 L267.0,578.0 L270.3,582.0 L273.5,586.0 L276.9,590.0 L280.7,594.0 M266.3,574.0 L269.7,578.0 L273.0,582.0 L276.3,586.0 L279.8,590.0 M265.4,570.0 L269.0,574.0 L272.4,578.0 L275.8,582.0 L279.1,586.0 L282.7,590.0 M264.0,566.0 L268.1,570.0 L271.7,574.0 L275.1,578.0 L278.5,582.0 L281.9,586.0 M266.8,566.0 L270.9,570.0 L274.4,574.0 L277.8,578.0 L281.2,582.0 M265.6,562.0 L269.7,566.0 L273.6,570.0 L277.2,574.0 L280.5,578.0 L284.0,582.0 M264.4,558.0 L268.6,562.0 L272.6,566.0 L276.4,570.0 L279.9,574.0 L283.3,578.0 M263.3,554.0 L267.5,558.0 L271.5,562.0 L275.4,566.0 L279.2,570.0 L282.6,574.0 M266.5,554.0 L270.6,558.0 L274.5,562.0 L278.3,566.0 L281.9,570.0 M265.6,550.0 L269.7,554.0 L273.6,558.0 L277.5,562.0 L281.1,566.0 L284.7,570.0 M264.8,546.0 L268.9,550.0 L272.9,554.0 L276.7,558.0 L280.4,562.0 L284.0,566.0 M263.9,542.0 L268.2,546.0 L272.2,550.0 L276.1,554.0 L279.8,558.0 L283.4,562.0 M263.2,538.0 L267.5,542.0 L271.6,546.0 L275.5,550.0 L279.2,554.0 L282.9,558.0 L286.4,562.0 M262.5,534.0 L266.8,538.0 L271.0,542.0 L275.0,546.0 L278.7,550.0 L282.4,554.0 L285.9,558.0 M262.0,530.0 L266.3,534.0 L270.5,538.0 L274.5,542.0 L278.3,546.0 L282.0,550.0 L285.6,554.0 M261.6,526.0 L266.0,530.0 L270.2,534.0 L274.2,538.0 L278.0,542.0 L281.7,546.0 L285.3,550.0 M261.4,522.0 L265.7,526.0 L269.9,530.0 L274.0,534.0 L277.8,538.0 L281.6,542.0 L285.1,546.0 L288.6,550.0 M261.3,518.0 L265.7,522.0 L269.9,526.0 L273.9,530.0 L277.8,534.0 L281.5,538.0 L285.1,542.0 L288.5,546.0 M261.6,514.0 L265.8,518.0 L270.0,522.0 L274.0,526.0 L277.9,530.0 L281.6,534.0 L285.2,538.0 L288.6,542.0 M262.1,510.0 L266.2,514.0 L270.2,518.0 L274.2,522.0 L278.1,526.0 L281.8,530.0 L285.4,534.0 L288.8,538.0 M258.5,502.0 L262.7,506.0 L266.8,510.0 L270.7,514.0 L274.7,518.0 L278.5,522.0 L282.2,526.0 L285.8,530.0 L289.2,534.0 M259.5,498.0 L263.5,502.0 L267.5,506.0 L271.4,510.0 L275.3,514.0 L279.1,518.0 L282.8,522.0 L286.4,526.0 L289.8,530.0 M260.7,494.0 L264.5,498.0 L268.4,502.0 L272.3,506.0 L276.1,510.0 L279.9,514.0 L283.5,518.0 L287.1,522.0 L290.5,526.0 M258.6,486.0 L262.1,490.0 L265.8,494.0 L269.5,498.0 L273.3,502.0 L277.1,506.0 L280.8,510.0 L284.4,514.0 L288.0,518.0 L291.4,522.0 M260.2,482.0 L263.7,486.0 L267.2,490.0 L270.9,494.0 L274.5,498.0 L278.2,502.0 L281.9,506.0 L285.5,510.0 L289.0,514.0 L292.4,518.0 M261.9,478.0 L265.4,482.0 L268.9,486.0 L272.4,490.0 L276.0,494.0 L279.5,498.0 L283.1,502.0 L286.7,506.0 L290.2,510.0 L293.6,514.0 M263.6,474.0 L267.1,478.0 L270.6,482.0 L274.0,486.0 L277.5,490.0 L281.0,494.0 L284.5,498.0 L288.0,502.0 L291.5,506.0 L294.9,510.0 M261.7,466.0 L265.3,470.0 L268.8,474.0 L272.2,478.0 L275.7,482.0 L279.2,486.0 L282.6,490.0 L286.1,494.0 L289.5,498.0 L292.9,502.0 L296.3,506.0 M262.7,462.0 L267.0,466.0 L270.5,470.0 L273.9,474.0 L277.4,478.0 L280.9,482.0 L284.3,486.0 L287.8,490.0 L291.2,494.0 L294.5,498.0 M263.5,458.0 L268.0,462.0 L272.2,466.0 L275.7,470.0 L279.1,474.0 L282.6,478.0 L286.0,482.0 L289.5,486.0 L292.9,490.0 L296.3,494.0 M260.1,450.0 L264.7,454.0 L269.1,458.0 L273.4,462.0 L277.4,466.0 L280.9,470.0 L284.3,474.0 L287.8,478.0 L291.2,482.0 L294.6,486.0 L298.0,490.0 M261.5,446.0 L266.0,450.0 L270.4,454.0 L274.6,458.0 L278.8,462.0 L282.6,466.0 L286.1,470.0 L289.5,474.0 L293.0,478.0 L296.4,482.0 L299.8,486.0 M258.5,438.0 L263.1,442.0 L267.6,446.0 L271.9,450.0 L276.1,454.0 L280.2,458.0 L284.1,462.0 L287.8,466.0 L291.3,470.0 L294.7,474.0 L298.1,478.0 M255.6,430.0 L260.3,434.0 L265.0,438.0 L269.4,442.0 L273.7,446.0 L277.8,450.0 L281.8,454.0 L285.7,458.0 L289.5,462.0 L293.1,466.0 L296.5,470.0 L299.9,474.0 M253.0,422.0 L257.8,426.0 L262.5,430.0 L267.0,434.0 L271.4,438.0 L275.7,442.0 L279.7,446.0 L283.7,450.0 L287.5,454.0 L291.3,458.0 L294.8,462.0 L298.3,466.0 L301.7,470.0 M255.8,418.0 L260.3,422.0 L264.9,426.0 L269.4,430.0 L273.7,434.0 L277.9,438.0 L281.9,442.0 L285.8,446.0 L289.6,450.0 L293.3,454.0 L296.8,458.0 L300.2,462.0 M254.9,410.0 L259.1,414.0 L263.4,418.0 L267.7,422.0 L272.0,426.0 L276.3,430.0 L280.4,434.0 L284.4,438.0 L288.2,442.0 L291.9,446.0 L295.5,450.0 L299.0,454.0 L302.3,458.0 M262.7,410.0 L266.8,414.0 L270.9,418.0 L275.0,422.0 L279.1,426.0 L283.2,430.0 L287.0,434.0 L290.8,438.0 L294.5,442.0 L298.0,446.0 L301.4,450.0 L304.7,454.0 M270.5,410.0 L274.5,414.0 L278.4,418.0 L282.3,422.0 L286.2,426.0 L290.0,430.0 L293.7,434.0 L297.3,438.0 L300.7,442.0 L304.1,446.0 M278.2,410.0 L282.1,414.0 L285.9,418.0 L289.6,422.0 L293.4,426.0 L296.9,430.0 L300.4,434.0 L303.7,438.0 L307.0,442.0 M286.0,410.0 L289.8,414.0 L293.4,418.0 L297.0,422.0 L300.5,426.0 L303.8,430.0 L307.1,434.0 M293.8,410.0 L297.4,414.0 L300.9,418.0 L304.3,422.0 L307.6,426.0 M301.6,410.0 L305.1,414.0 L308.4,418.0 L311.6,422.0 M309.3,410.0 L312.8,414.0" stroke="url(#gBack)" stroke-width="0.70" fill="none"/>
<path d="M258.8,410.0 L255.0,414.0 M266.6,410.0 L262.7,414.0 L258.9,418.0 L255.5,422.0 M274.3,410.0 L270.4,414.0 L266.4,418.0 L262.8,422.0 L259.4,426.0 L256.2,430.0 M282.1,410.0 L278.0,414.0 L274.0,418.0 L270.1,422.0 L266.5,426.0 L263.1,430.0 L259.7,434.0 L256.5,438.0 M289.9,410.0 L285.7,414.0 L281.5,418.0 L277.4,422.0 L273.7,426.0 L270.0,430.0 L266.4,434.0 L263.0,438.0 L259.6,442.0 M297.7,410.0 L293.3,414.0 L289.0,418.0 L284.8,422.0 L280.8,426.0 L276.9,430.0 L273.1,434.0 L269.5,438.0 L265.9,442.0 L262.4,446.0 L259.0,450.0 M305.4,410.0 L301.0,414.0 L296.5,418.0 L292.1,422.0 L287.9,426.0 L283.8,430.0 L279.8,434.0 L275.9,438.0 L272.2,442.0 L268.5,446.0 L264.9,450.0 L261.5,454.0 M313.2,410.0 L308.7,414.0 L304.0,418.0 L299.4,422.0 L295.0,426.0 L290.7,430.0 L286.5,434.0 L282.4,438.0 L278.4,442.0 L274.6,446.0 L270.8,450.0 L267.2,454.0 L263.7,458.0 M311.5,418.0 L306.8,422.0 L302.1,426.0 L297.6,430.0 L293.1,434.0 L288.9,438.0 L284.7,442.0 L280.7,446.0 L276.7,450.0 L272.9,454.0 L269.2,458.0 L265.7,462.0 L262.0,466.0 M309.2,426.0 L304.5,430.0 L299.8,434.0 L295.3,438.0 L291.0,442.0 L286.7,446.0 L282.6,450.0 L278.6,454.0 L274.8,458.0 L271.0,462.0 L267.2,466.0 L262.7,470.0 M306.5,434.0 L301.8,438.0 L297.2,442.0 L292.8,446.0 L288.5,450.0 L284.4,454.0 L280.3,458.0 L276.4,462.0 L272.4,466.0 L267.9,470.0 L263.4,474.0 M308.2,438.0 L303.5,442.0 L298.9,446.0 L294.4,450.0 L290.1,454.0 L285.9,458.0 L281.8,462.0 L277.6,466.0 L273.1,470.0 L268.6,474.0 L264.1,478.0 L259.6,482.0 M305.0,446.0 L300.3,450.0 L295.8,454.0 L291.4,458.0 L287.1,462.0 L282.9,466.0 L278.3,470.0 L273.8,474.0 L269.3,478.0 L264.8,482.0 L260.3,486.0 M301.5,454.0 L296.9,458.0 L292.5,462.0 L288.1,466.0 L283.5,470.0 L279.0,474.0 L274.5,478.0 L270.0,482.0 L265.5,486.0 L261.0,490.0 M302.5,458.0 L297.8,462.0 L293.3,466.0 L288.7,470.0 L284.2,474.0 L279.7,478.0 L275.1,482.0 L270.6,486.0 L266.1,490.0 L261.8,494.0 M303.2,462.0 L298.5,466.0 L294.0,470.0 L289.4,474.0 L284.8,478.0 L280.3,482.0 L275.8,486.0 L271.2,490.0 L266.9,494.0 L262.6,498.0 L258.6,502.0 M299.2,470.0 L294.6,474.0 L290.0,478.0 L285.5,482.0 L280.9,486.0 L276.4,490.0 L272.0,494.0 L267.6,498.0 L263.5,502.0 L259.7,506.0 M299.8,474.0 L295.2,478.0 L290.6,482.0 L286.0,486.0 L281.5,490.0 L277.0,494.0 L272.6,498.0 L268.4,502.0 L264.5,506.0 L260.6,510.0 M300.4,478.0 L295.8,482.0 L291.2,486.0 L286.6,490.0 L282.1,494.0 L277.6,498.0 L273.4,502.0 L269.3,506.0 L265.3,510.0 L261.4,514.0 M296.3,486.0 L291.8,490.0 L287.2,494.0 L282.6,498.0 L278.3,502.0 L274.1,506.0 L270.0,510.0 L266.0,514.0 L262.2,518.0 M296.9,490.0 L292.3,494.0 L287.6,498.0 L283.2,502.0 L278.9,506.0 L274.7,510.0 L270.5,514.0 L266.6,518.0 L262.9,522.0 M297.3,494.0 L292.6,498.0 L288.1,502.0 L283.7,506.0 L279.3,510.0 L275.1,514.0 L271.1,518.0 L267.2,522.0 L263.5,526.0 M297.7,498.0 L293.0,502.0 L288.5,506.0 L284.0,510.0 L279.7,514.0 L275.5,518.0 L271.5,522.0 L267.6,526.0 L263.9,530.0 M293.3,506.0 L288.7,510.0 L284.3,514.0 L279.9,518.0 L275.8,522.0 L271.8,526.0 L267.9,530.0 L264.2,534.0 M293.4,510.0 L288.8,514.0 L284.4,518.0 L280.1,522.0 L275.9,526.0 L271.9,530.0 L268.0,534.0 L264.3,538.0 M293.4,514.0 L288.8,518.0 L284.3,522.0 L280.0,526.0 L275.8,530.0 L271.8,534.0 L267.9,538.0 L264.2,542.0 M293.3,518.0 L288.6,522.0 L284.1,526.0 L279.8,530.0 L275.6,534.0 L271.6,538.0 L267.8,542.0 L264.0,546.0 M292.9,522.0 L288.3,526.0 L283.8,530.0 L279.4,534.0 L275.3,538.0 L271.3,542.0 L267.4,546.0 L263.6,550.0 M292.4,526.0 L287.7,530.0 L283.3,534.0 L278.9,538.0 L274.8,542.0 L270.8,546.0 L266.9,550.0 L263.1,554.0 M291.7,530.0 L287.1,534.0 L282.6,538.0 L278.3,542.0 L274.2,546.0 L270.1,550.0 L266.2,554.0 M290.9,534.0 L286.3,538.0 L281.9,542.0 L277.6,546.0 L273.4,550.0 L269.4,554.0 L265.5,558.0 M290.0,538.0 L285.4,542.0 L281.0,546.0 L276.7,550.0 L272.6,554.0 L268.6,558.0 L264.8,562.0 M288.9,542.0 L284.4,546.0 L280.0,550.0 L275.8,554.0 L271.7,558.0 L267.7,562.0 L263.9,566.0 M287.8,546.0 L283.3,550.0 L279.0,554.0 L274.8,558.0 L270.7,562.0 L266.8,566.0 M286.6,550.0 L282.1,554.0 L277.8,558.0 L273.7,562.0 L269.6,566.0 L265.7,570.0 M285.3,554.0 L280.9,558.0 L276.6,562.0 L272.5,566.0 L268.5,570.0 L264.1,574.0 M284.0,558.0 L279.6,562.0 L275.3,566.0 L271.3,570.0 L266.8,574.0 M287.0,558.0 L282.5,562.0 L278.2,566.0 L274.0,570.0 L269.5,574.0 L265.0,578.0 M285.5,562.0 L281.1,566.0 L276.8,570.0 L272.3,574.0 L267.7,578.0 L262.9,582.0 M283.9,566.0 L279.5,570.0 L275.0,574.0 L270.4,578.0 L265.6,582.0 M282.3,570.0 L277.7,574.0 L273.1,578.0 L268.4,582.0 L263.4,586.0 M285.0,570.0 L280.4,574.0 L275.8,578.0 L271.1,582.0 L266.2,586.0 L261.3,590.0 M283.1,574.0 L278.5,578.0 L273.9,582.0 L269.1,586.0 L264.2,590.0 L259.2,594.0 M281.2,578.0 L276.6,582.0 L271.9,586.0 L267.1,590.0 L262.3,594.0 M283.9,578.0 L279.3,582.0 L274.7,586.0 L270.0,590.0 L265.3,594.0 L260.4,598.0 M282.1,582.0 L277.5,586.0 L272.9,590.0 L268.3,594.0 L263.6,598.0 L258.7,602.0 M280.3,586.0 L275.8,590.0 L271.4,594.0 L266.7,598.0 L261.9,602.0 L257.1,606.0 M283.2,586.0 L278.7,590.0 L274.4,594.0 L269.9,598.0 L265.2,602.0 L260.5,606.0 L255.7,610.0 M281.6,590.0 L277.4,594.0 L273.0,598.0 L268.5,602.0 L263.9,606.0 L259.2,610.0 L254.4,614.0 M280.4,594.0 L276.2,598.0 L271.8,602.0 L267.3,606.0 L262.7,610.0 L258.0,614.0 L253.8,618.0 M279.4,598.0 L275.1,602.0 L270.7,606.0 L266.2,610.0 L261.6,614.0 L257.5,618.0 M282.5,598.0 L278.4,602.0 L274.1,606.0 L269.8,610.0 L265.3,614.0 L261.1,618.0 L257.0,622.0 M281.7,602.0 L277.5,606.0 L273.3,610.0 L268.9,614.0 L264.8,618.0 L260.7,622.0 L256.7,626.0 M280.9,606.0 L276.8,610.0 L272.5,614.0 L268.5,618.0 L264.4,622.0 L260.4,626.0 L256.4,630.0 L254.4,634.0 M280.3,610.0 L276.1,614.0 L272.1,618.0 L268.0,622.0 L264.0,626.0 L260.0,630.0 L258.0,634.0 M279.8,614.0 L275.8,618.0 L271.7,622.0 L267.7,626.0 L263.7,630.0 L261.7,634.0 M279.4,618.0 L275.4,622.0 L271.4,626.0 L267.4,630.0 L265.4,634.0 M283.1,618.0 L279.1,622.0 L275.1,626.0 L271.1,630.0 L269.1,634.0 M282.8,622.0 L278.8,626.0 L274.8,630.0 L272.8,634.0 M282.4,626.0 L278.4,630.0 L276.4,634.0 M282.1,630.0 L280.1,634.0 M254.0,630.0 L256.0,634.0 M253.6,626.0 L257.6,630.0 L259.6,634.0 M257.3,626.0 L261.3,630.0 L263.3,634.0 M257.0,622.0 L261.0,626.0 L265.0,630.0 L267.0,634.0 M256.8,618.0 L260.7,622.0 L264.7,626.0 L268.7,630.0 L270.7,634.0 M256.6,614.0 L260.5,618.0 L264.3,622.0 L268.3,626.0 L272.3,630.0 L274.3,634.0 M257.0,610.0 L260.2,614.0 L264.1,618.0 L268.0,622.0 L272.0,626.0 L276.0,630.0 L278.0,634.0 M257.3,606.0 L260.5,610.0 L263.9,614.0 L267.8,618.0 L271.7,622.0 L275.7,626.0 L279.7,630.0 L281.7,634.0 M257.5,602.0 L260.7,606.0 L264.0,610.0 L267.5,614.0 L271.4,618.0 L275.4,622.0 L279.4,626.0 M257.8,598.0 L260.8,602.0 L264.1,606.0 L267.5,610.0 L271.1,614.0 L275.1,618.0 L279.1,622.0 L283.1,626.0 M261.0,598.0 L264.1,602.0 L267.5,606.0 L271.1,610.0 L274.7,614.0 L278.7,618.0 L282.7,622.0 M261.0,594.0 L264.1,598.0 L267.4,602.0 L270.9,606.0 L274.6,610.0 L278.4,614.0 L282.4,618.0 M260.9,590.0 L264.0,594.0 L267.3,598.0 L270.7,602.0 L274.3,606.0 L278.1,610.0 L282.0,614.0 M263.8,590.0 L267.1,594.0 L270.4,598.0 L274.0,602.0 L277.7,606.0 L281.6,610.0 M263.6,586.0 L266.7,590.0 L270.1,594.0 L273.6,598.0 L277.3,602.0 L281.1,606.0 M263.4,582.0 L266.5,586.0 L269.6,590.0 L273.1,594.0 L276.8,598.0 L280.6,602.0 M262.9,578.0 L266.1,582.0 L269.3,586.0 L272.6,590.0 L276.2,594.0 L279.9,598.0 M265.6,578.0 L268.9,582.0 L272.1,586.0 L275.5,590.0 L279.2,594.0 L283.1,598.0 M264.9,574.0 L268.3,578.0 L271.6,582.0 L274.9,586.0 L278.4,590.0 L282.2,594.0 M264.0,570.0 L267.6,574.0 L271.1,578.0 L274.4,582.0 L277.7,586.0 L281.3,590.0 M266.8,570.0 L270.4,574.0 L273.8,578.0 L277.1,582.0 L280.5,586.0 M265.4,566.0 L269.5,570.0 L273.1,574.0 L276.5,578.0 L279.9,582.0 L283.4,586.0 M264.1,562.0 L268.3,566.0 L272.3,570.0 L275.8,574.0 L279.2,578.0 L282.6,582.0 M262.9,558.0 L267.1,562.0 L271.1,566.0 L275.0,570.0 L278.5,574.0 L281.9,578.0 M266.0,558.0 L270.1,562.0 L274.0,566.0 L277.8,570.0 L281.2,574.0 L284.6,578.0 M264.9,554.0 L269.0,558.0 L273.0,562.0 L276.8,566.0 L280.5,570.0 L284.0,574.0 M264.0,550.0 L268.1,554.0 L272.1,558.0 L276.0,562.0 L279.7,566.0 L283.3,570.0 M263.1,546.0 L267.2,550.0 L271.3,554.0 L275.2,558.0 L278.9,562.0 L282.6,566.0 M262.2,542.0 L266.5,546.0 L270.5,550.0 L274.5,554.0 L278.3,558.0 L281.9,562.0 L285.4,566.0 M261.3,538.0 L265.7,542.0 L269.9,546.0 L273.8,550.0 L277.6,554.0 L281.3,558.0 L284.9,562.0 M265.0,538.0 L269.2,542.0 L273.3,546.0 L277.1,550.0 L280.8,554.0 L284.4,558.0 M264.4,534.0 L268.7,538.0 L272.7,542.0 L276.7,546.0 L280.4,550.0 L284.0,554.0 L287.5,558.0 M264.0,530.0 L268.2,534.0 L272.3,538.0 L276.3,542.0 L280.0,546.0 L283.7,550.0 L287.2,554.0 M259.3,522.0 L263.7,526.0 L267.9,530.0 L272.1,534.0 L276.0,538.0 L279.8,542.0 L283.4,546.0 L287.0,550.0 M259.1,518.0 L263.5,522.0 L267.8,526.0 L271.9,530.0 L275.9,534.0 L279.7,538.0 L283.3,542.0 L286.8,546.0 M259.3,514.0 L263.6,518.0 L267.8,522.0 L271.9,526.0 L275.9,530.0 L279.7,534.0 L283.3,538.0 L286.8,542.0 M259.7,510.0 L263.9,514.0 L268.0,518.0 L272.1,522.0 L276.1,526.0 L279.9,530.0 L283.5,534.0 L287.0,538.0 M260.3,506.0 L264.4,510.0 L268.4,514.0 L272.4,518.0 L276.4,522.0 L280.2,526.0 L283.8,530.0 L287.3,534.0 L290.7,538.0 M261.0,502.0 L265.1,506.0 L269.1,510.0 L273.0,514.0 L276.9,518.0 L280.7,522.0 L284.3,526.0 L287.8,530.0 L291.1,534.0 M258.2,494.0 L262.0,498.0 L265.9,502.0 L269.9,506.0 L273.8,510.0 L277.6,514.0 L281.3,518.0 L284.9,522.0 L288.4,526.0 L291.8,530.0 M259.5,490.0 L263.3,494.0 L267.0,498.0 L270.8,502.0 L274.7,506.0 L278.5,510.0 L282.2,514.0 L285.8,518.0 L289.2,522.0 L292.6,526.0 M261.2,486.0 L264.7,490.0 L268.3,494.0 L272.0,498.0 L275.7,502.0 L279.5,506.0 L283.2,510.0 L286.7,514.0 L290.2,518.0 L293.5,522.0 M262.8,482.0 L266.3,486.0 L269.8,490.0 L273.4,494.0 L277.0,498.0 L280.6,502.0 L284.3,506.0 L287.8,510.0 L291.3,514.0 M261.0,474.0 L264.5,478.0 L268.0,482.0 L271.5,486.0 L274.9,490.0 L278.5,494.0 L282.0,498.0 L285.6,502.0 L289.1,506.0 L292.5,510.0 M262.6,470.0 L266.2,474.0 L269.7,478.0 L273.1,482.0 L276.6,486.0 L280.1,490.0 L283.6,494.0 L287.0,498.0 L290.5,502.0 L293.9,506.0 M264.4,466.0 L267.9,470.0 L271.3,474.0 L274.8,478.0 L278.3,482.0 L281.8,486.0 L285.2,490.0 L288.6,494.0 L292.0,498.0 L295.4,502.0 M260.8,458.0 L265.4,462.0 L269.6,466.0 L273.1,470.0 L276.5,474.0 L280.0,478.0 L283.5,482.0 L286.9,486.0 L290.3,490.0 L293.7,494.0 L297.0,498.0 M261.8,454.0 L266.3,458.0 L270.7,462.0 L274.8,466.0 L278.3,470.0 L281.7,474.0 L285.2,478.0 L288.6,482.0 L292.1,486.0 L295.5,490.0 M258.5,446.0 L263.0,450.0 L267.5,454.0 L271.9,458.0 L276.1,462.0 L280.0,466.0 L283.5,470.0 L286.9,474.0 L290.4,478.0 L293.8,482.0 L297.2,486.0 M260.0,442.0 L264.5,446.0 L268.9,450.0 L273.2,454.0 L277.4,458.0 L281.4,462.0 L285.2,466.0 L288.7,470.0 L292.1,474.0 L295.5,478.0 L299.0,482.0 M257.0,434.0 L261.7,438.0 L266.3,442.0 L270.6,446.0 L274.9,450.0 L279.0,454.0 L282.9,458.0 L286.8,462.0 L290.5,466.0 L293.9,470.0 L297.3,474.0 L300.7,478.0 M254.2,426.0 L259.0,430.0 L263.7,434.0 L268.2,438.0 L272.5,442.0 L276.7,446.0 L280.8,450.0 L284.7,454.0 L288.5,458.0 L292.2,462.0 L295.7,466.0 L299.1,470.0 M256.7,422.0 L261.4,426.0 L265.9,430.0 L270.4,434.0 L274.7,438.0 L278.8,442.0 L282.8,446.0 L286.7,450.0 L290.4,454.0 L294.0,458.0 L297.5,462.0 L300.9,466.0 M255.3,414.0 L259.6,418.0 L264.0,422.0 L268.5,426.0 L272.8,430.0 L277.0,434.0 L281.1,438.0 L285.1,442.0 L288.9,446.0 L292.6,450.0 L296.1,454.0 L299.6,458.0 L302.9,462.0 M258.8,410.0 L263.0,414.0 L267.1,418.0 L271.3,422.0 L275.6,426.0 L279.7,430.0 L283.7,434.0 L287.6,438.0 L291.3,442.0 L295.0,446.0 L298.5,450.0 L301.9,454.0 M266.6,410.0 L270.6,414.0 L274.6,418.0 L278.7,422.0 L282.7,426.0 L286.6,430.0 L290.4,434.0 L294.0,438.0 L297.6,442.0 L301.0,446.0 L304.4,450.0 M274.3,410.0 L278.3,414.0 L282.1,418.0 L286.0,422.0 L289.8,426.0 L293.5,430.0 L297.1,434.0 L300.5,438.0 L303.9,442.0 M282.1,410.0 L286.0,414.0 L289.6,418.0 L293.3,422.0 L296.9,426.0 L300.4,430.0 L303.7,434.0 L307.0,438.0 M289.9,410.0 L293.6,414.0 L297.2,418.0 L300.6,422.0 L304.0,426.0 L307.3,430.0 M297.7,410.0 L301.3,414.0 L304.7,418.0 L308.0,422.0 M305.4,410.0 L308.9,414.0 L312.2,418.0" stroke="url(#gFront)" stroke-width="1.05" fill="none"/>
</g>
<!--/MESH-->
<g mask="url(#mLow)"><rect x="250" y="480" width="70" height="155" fill="#dcdcdc"/><use href="#meshg" filter="url(#fMesh)"/></g>
</g>
<path d="M259,414 L259.4,420 L262.7,440 C264,450 265.9,458 265.9,465 C265.9,474 263.4,482 262.7,491 C262,500 262.2,508 262.7,516 C263.4,526 264.6,535 265.2,545 C265.8,555 266.6,563 266.3,571 C266,578 264.2,583 262.8,589 C261.4,595 258.6,606 257.3,614 C256.4,620 257.5,625.5 261,628.3 C264,630.4 270,630.6 274,629 C277.6,627.4 279.6,624 279.8,619 C280,609 279.8,598 280.6,589 C281.2,582 282.4,577 283.2,571 C284.2,563 285.5,551 287.5,540 C289,531 290,523 290.7,516 C291.8,507 293.2,499 294.5,491 C295.8,482 297.2,473 298.3,465 C299.6,456 300.6,449 302.1,440 C303.4,432 304.6,425 305.5,420 L306.5,414 Z" fill="none" stroke="#444" stroke-width="0.9" stroke-opacity="0.7"/>
<path d="M258,392.6 Q260.0,390.2 262.0,391.7 Q263.9,389.3 265.9,390.8 Q267.9,388.5 269.9,390.0 Q271.9,387.8 273.8,389.5 Q275.8,387.3 277.8,389.1 Q279.8,387.1 281.8,389.0 Q283.8,387.1 285.7,389.2 Q287.7,387.4 289.7,389.5 Q291.7,387.9 293.7,390.1 Q295.6,388.6 297.6,390.9 Q299.6,389.5 301.6,391.8 Q303.6,390.4 305.5,393.8 Q307.5,391.9 309.5,393.8 C309.9,398 309,403 307.8,408 C307,411.5 306.2,414 305.8,416 Q303.4,418.0 301.1,416.8 Q298.7,418.8 296.3,417.5 Q294.0,419.4 291.6,418.1 Q289.2,419.9 286.9,418.5 Q284.5,420.2 282.1,418.6 Q279.8,420.2 277.4,418.5 Q275.1,419.9 272.7,418.1 Q270.3,419.4 268.0,417.5 Q265.6,418.8 263.2,416.8 Q260.9,418.0 258.5,416.0 C258,408 257.8,400 258,392.6 Z" fill="#171717"/>
<g clip-path="url(#laceclip)"><circle cx="281.2" cy="395.9" r="0.8" fill="#444444"/><circle cx="283.9" cy="396.2" r="1.0" fill="#313131"/><circle cx="282.3" cy="396.4" r="0.6" fill="#313131"/><circle cx="273.9" cy="391.0" r="1.0" fill="#454545"/><circle cx="290.1" cy="396.3" r="1.1" fill="#383838"/><circle cx="291.0" cy="396.5" r="0.9" fill="#313131"/><circle cx="299.8" cy="390.7" r="0.6" fill="#2d2d2d"/><circle cx="270.9" cy="390.3" r="0.7" fill="#3a3a3a"/><circle cx="288.0" cy="392.1" r="0.9" fill="#333333"/><circle cx="283.5" cy="397.0" r="0.9" fill="#3a3a3a"/><circle cx="278.9" cy="395.8" r="0.5" fill="#464646"/><circle cx="271.4" cy="398.0" r="0.7" fill="#3c3c3c"/><circle cx="262.4" cy="398.0" r="0.6" fill="#383838"/><circle cx="273.3" cy="390.7" r="1.0" fill="#2c2c2c"/><circle cx="259.0" cy="392.2" r="0.8" fill="#2d2d2d"/><circle cx="307.0" cy="394.2" r="0.8" fill="#2e2e2e"/><circle cx="268.7" cy="397.1" r="0.6" fill="#363636"/><circle cx="275.3" cy="400.1" r="1.1" fill="#444444"/><circle cx="265.6" cy="397.4" r="0.5" fill="#2c2c2c"/><circle cx="298.1" cy="391.9" r="0.6" fill="#3d3d3d"/><circle cx="283.9" cy="400.3" r="0.6" fill="#444444"/><circle cx="290.5" cy="391.2" r="1.1" fill="#393939"/><circle cx="259.0" cy="399.1" r="0.9" fill="#454545"/><circle cx="307.9" cy="390.2" r="0.7" fill="#313131"/><circle cx="300.9" cy="396.7" r="0.5" fill="#2f2f2f"/><circle cx="266.2" cy="394.6" r="1.0" fill="#2c2c2c"/><circle cx="275.1" cy="393.1" r="0.5" fill="#2e2e2e"/><circle cx="269.2" cy="396.7" r="0.9" fill="#2c2c2c"/><circle cx="277.2" cy="394.8" r="0.8" fill="#3e3e3e"/><circle cx="287.2" cy="399.1" r="0.9" fill="#313131"/><circle cx="274.2" cy="392.4" r="0.6" fill="#3f3f3f"/><circle cx="268.3" cy="397.8" r="0.6" fill="#3d3d3d"/><circle cx="305.6" cy="399.3" r="0.5" fill="#3f3f3f"/><circle cx="261.3" cy="391.1" r="1.1" fill="#3c3c3c"/><circle cx="270.7" cy="397.4" r="0.8" fill="#343434"/><circle cx="303.3" cy="395.2" r="0.6" fill="#3c3c3c"/><circle cx="294.3" cy="390.7" r="0.8" fill="#333333"/><circle cx="291.0" cy="396.5" r="0.7" fill="#2e2e2e"/><circle cx="304.0" cy="392.1" r="0.5" fill="#2c2c2c"/><circle cx="279.2" cy="392.6" r="0.6" fill="#2d2d2d"/><circle cx="277.1" cy="396.0" r="0.6" fill="#303030"/><circle cx="265.8" cy="394.7" r="0.9" fill="#363636"/><circle cx="292.9" cy="396.1" r="0.9" fill="#303030"/><circle cx="304.3" cy="395.0" r="0.9" fill="#373737"/><circle cx="306.2" cy="390.2" r="0.5" fill="#404040"/><circle cx="262.3" cy="393.3" r="1.1" fill="#303030"/><circle cx="262.7" cy="395.7" r="0.5" fill="#434343"/><circle cx="304.9" cy="397.7" r="1.0" fill="#303030"/><circle cx="303.8" cy="393.7" r="0.8" fill="#414141"/><circle cx="262.8" cy="399.0" r="0.5" fill="#454545"/><circle cx="283.5" cy="390.2" r="0.7" fill="#414141"/><circle cx="287.6" cy="396.4" r="0.6" fill="#2e2e2e"/><circle cx="264.7" cy="392.7" r="0.9" fill="#393939"/><circle cx="278.0" cy="397.7" r="0.8" fill="#3e3e3e"/><circle cx="281.7" cy="395.7" r="1.0" fill="#3c3c3c"/><circle cx="260.5" cy="396.3" r="0.5" fill="#3b3b3b"/><circle cx="305.9" cy="391.2" r="0.9" fill="#444444"/><circle cx="304.1" cy="392.7" r="0.7" fill="#2c2c2c"/><circle cx="266.0" cy="396.4" r="0.6" fill="#3c3c3c"/><circle cx="303.4" cy="396.9" r="0.8" fill="#3a3a3a"/><circle cx="270.8" cy="394.2" r="0.6" fill="#343434"/><circle cx="280.1" cy="398.5" r="1.0" fill="#323232"/><circle cx="277.8" cy="396.1" r="0.6" fill="#363636"/><circle cx="265.6" cy="393.7" r="1.0" fill="#484848"/><circle cx="293.8" cy="400.0" r="1.0" fill="#343434"/><circle cx="264.5" cy="394.9" r="1.0" fill="#323232"/><circle cx="277.7" cy="395.5" r="0.7" fill="#414141"/><circle cx="300.1" cy="400.3" r="0.7" fill="#3a3a3a"/><circle cx="299.6" cy="392.9" r="0.5" fill="#3f3f3f"/><circle cx="293.7" cy="396.0" r="0.9" fill="#353535"/><circle cx="286.1" cy="414.9" r="0.9" fill="#515151"/><circle cx="260.2" cy="416.6" r="1.1" fill="#474747"/><circle cx="297.2" cy="417.9" r="0.9" fill="#3f3f3f"/><circle cx="289.2" cy="415.1" r="1.3" fill="#4f4f4f"/><circle cx="291.9" cy="411.2" r="0.8" fill="#565656"/><circle cx="293.3" cy="415.9" r="1.1" fill="#5a5a5a"/><circle cx="267.6" cy="411.8" r="1.0" fill="#4e4e4e"/><circle cx="304.4" cy="413.8" r="0.9" fill="#424242"/><circle cx="297.0" cy="417.2" r="0.9" fill="#3d3d3d"/><circle cx="301.8" cy="412.8" r="0.9" fill="#545454"/><circle cx="289.0" cy="417.2" r="1.0" fill="#505050"/><circle cx="290.3" cy="413.8" r="0.9" fill="#4d4d4d"/><circle cx="290.3" cy="411.2" r="0.7" fill="#3f3f3f"/><circle cx="302.2" cy="417.8" r="1.0" fill="#4b4b4b"/><circle cx="297.0" cy="412.2" r="0.8" fill="#393939"/><circle cx="263.0" cy="413.2" r="1.1" fill="#525252"/><circle cx="282.4" cy="409.7" r="0.9" fill="#3c3c3c"/><circle cx="260.7" cy="414.0" r="0.9" fill="#404040"/><circle cx="307.0" cy="417.2" r="1.2" fill="#595959"/><circle cx="292.1" cy="417.5" r="1.0" fill="#575757"/><circle cx="292.1" cy="415.9" r="1.0" fill="#545454"/><circle cx="272.9" cy="415.7" r="1.0" fill="#424242"/><circle cx="299.5" cy="414.3" r="1.1" fill="#4b4b4b"/><circle cx="304.8" cy="416.9" r="0.8" fill="#454545"/><circle cx="265.8" cy="414.1" r="1.0" fill="#494949"/><circle cx="268.6" cy="414.1" r="0.6" fill="#585858"/><circle cx="277.1" cy="414.1" r="1.0" fill="#3a3a3a"/><circle cx="278.2" cy="416.3" r="0.9" fill="#3f3f3f"/><circle cx="292.2" cy="410.1" r="0.9" fill="#5a5a5a"/><circle cx="303.2" cy="416.3" r="0.8" fill="#515151"/><circle cx="281.7" cy="410.6" r="1.2" fill="#535353"/><circle cx="303.9" cy="417.3" r="0.8" fill="#595959"/><circle cx="268.2" cy="414.8" r="0.7" fill="#484848"/><circle cx="296.4" cy="409.7" r="0.7" fill="#444444"/><circle cx="259.6" cy="411.9" r="0.8" fill="#4e4e4e"/><circle cx="282.9" cy="413.7" r="1.2" fill="#3f3f3f"/><circle cx="288.9" cy="415.6" r="1.2" fill="#595959"/><circle cx="260.1" cy="414.9" r="1.0" fill="#595959"/><circle cx="284.8" cy="416.8" r="1.0" fill="#5a5a5a"/><circle cx="284.4" cy="416.7" r="0.8" fill="#404040"/><circle cx="294.6" cy="416.4" r="0.8" fill="#434343"/><circle cx="274.1" cy="417.3" r="1.1" fill="#454545"/><circle cx="268.3" cy="410.3" r="0.7" fill="#474747"/><circle cx="263.2" cy="412.8" r="1.2" fill="#535353"/><circle cx="279.2" cy="416.2" r="0.7" fill="#404040"/><circle cx="289.1" cy="416.3" r="0.7" fill="#3e3e3e"/><circle cx="291.8" cy="417.2" r="0.7" fill="#4f4f4f"/><circle cx="283.3" cy="415.9" r="1.3" fill="#585858"/><circle cx="299.0" cy="416.3" r="0.7" fill="#565656"/><circle cx="260.8" cy="414.2" r="1.2" fill="#585858"/><circle cx="282.1" cy="411.1" r="0.7" fill="#3f3f3f"/><circle cx="299.3" cy="417.9" r="1.0" fill="#3e3e3e"/><circle cx="265.5" cy="415.3" r="1.1" fill="#3c3c3c"/><circle cx="274.7" cy="413.5" r="0.8" fill="#585858"/><circle cx="269.1" cy="412.7" r="1.2" fill="#3a3a3a"/><circle cx="267.7" cy="413.4" r="0.9" fill="#4f4f4f"/><circle cx="268.4" cy="410.9" r="1.2" fill="#585858"/><circle cx="274.5" cy="410.2" r="1.0" fill="#515151"/><circle cx="268.2" cy="414.5" r="1.2" fill="#4d4d4d"/><circle cx="271.4" cy="417.2" r="1.2" fill="#424242"/></g>
<path d="M258,399 C264,399.5 270,400.5 276,401 C284,401.6 296,401 309,398.5 L307.6,408.5 C298,410 288,410.4 280,410 C272,409.6 264,408.8 258.2,407.6 Z" fill="#0a0a0a"/>
</g>
</defs>
<use href="#leg"/>
<use href="#leg" transform="translate(633.2,0) scale(-1,1)"/>
<!-- slider -->
<rect x="599" y="64" width="84" height="4" fill="#e7e7e7"/>
<path d="M632,56.5 L643,56.5 L643,71.5 L637.5,76.8 L632,71.5 Z" fill="#0078d7"/>
</svg>
</body>
</html>
